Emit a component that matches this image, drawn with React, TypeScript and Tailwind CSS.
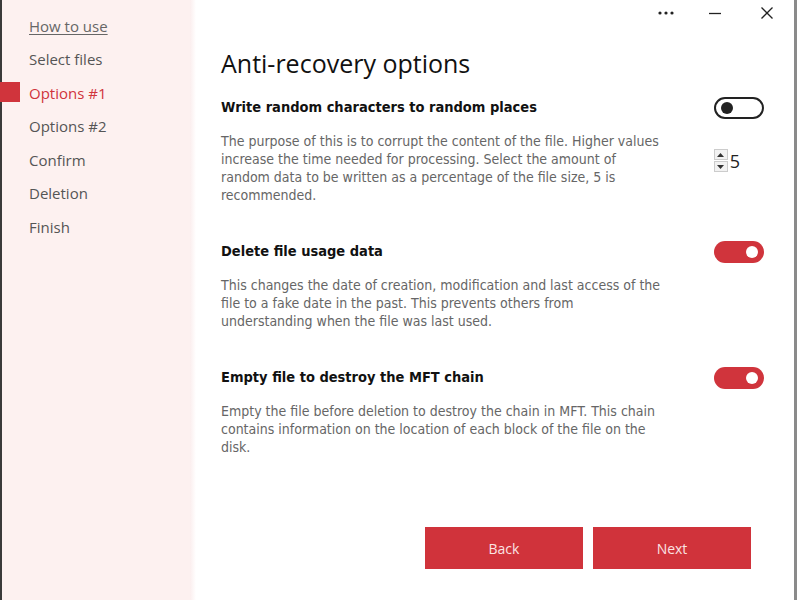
import React from "react";

const navItems = [
  "How to use",
  "Select files",
  "Options #1",
  "Options #2",
  "Confirm",
  "Deletion",
  "Finish",
];

const bodyFont = {
  fontFamily: '"DejaVu Sans Condensed", "DejaVu Sans", Verdana, sans-serif',
};

function Toggle({ on }: { on: boolean }) {
  if (on) {
    return (
      <div className="flex h-[22px] w-[50px] items-center justify-end rounded-full bg-[#d0343c] pr-[6px]">
        <div className="h-[12px] w-[12px] rounded-full bg-white" />
      </div>
    );
  }
  return (
    <div className="flex h-[22px] w-[50px] items-center rounded-full border-2 border-[#222] pl-[5px]">
      <div className="h-[12px] w-[12px] rounded-full bg-[#222]" />
    </div>
  );
}

function Spinner() {
  return (
    <div className="flex items-center gap-[2px]">
      <div className="flex flex-col gap-[1px]">
        <div className="flex h-[11px] w-[14px] items-center justify-center border border-[#ccc] bg-[#f2f2f2]">
          <svg width="7" height="4" viewBox="0 0 7 4">
            <path d="M0 4 L3.5 0 L7 4 Z" fill="#333" />
          </svg>
        </div>
        <div className="flex h-[11px] w-[14px] items-center justify-center border border-[#ccc] bg-[#f2f2f2]">
          <svg width="7" height="4" viewBox="0 0 7 4">
            <path d="M0 0 L3.5 4 L7 0 Z" fill="#333" />
          </svg>
        </div>
      </div>
      <span
        className="text-[18px] leading-none text-[#222]"
        style={{ fontFamily: '"Open Sans", sans-serif' }}
      >
        5
      </span>
    </div>
  );
}

function Option({
  title,
  text,
  control,
  side,
}: {
  title: string;
  text: string[];
  control: React.ReactNode;
  side?: React.ReactNode;
}) {
  return (
    <div className="flex flex-col">
      <div className="flex h-[22px] items-center justify-between pr-[30px]">
        <div className="text-[14.5px] font-bold text-[#111]" style={bodyFont}>
          {title}
        </div>
        {control}
      </div>
      <div className="mt-[13px] flex items-start justify-between pr-[54px]">
        <div className="text-[14px] leading-[18px] text-[#666]" style={bodyFont}>
          {text.map((t) => (
            <div key={t}>{t}</div>
          ))}
        </div>
        {side}
      </div>
    </div>
  );
}

export default function App() {
  return (
    <div className="flex h-[600px] w-[800px] overflow-hidden bg-white">
      <div className="w-[2px] bg-[#3a3a3a]" />
      <aside
        className="relative flex w-[188px] flex-col bg-[#fdf1f0] pt-[9px]"
        style={{ fontFamily: '"Open Sans", "Noto Sans", sans-serif' }}
      >
        {navItems.map((item, i) => {
          const active = i === 2;
          return (
            <div key={item} className="relative flex h-[33.5px] items-center">
              {active && (
                <div className="absolute left-[-2px] top-[6px] h-[20px] w-[20px] bg-[#d0343c]" />
              )}
              <span
                className={
                  "ml-[27px] text-[15px] " +
                  (active
                    ? "text-[#d0343c]"
                    : i === 0
                      ? "text-[#666] underline underline-offset-2"
                      : "text-[#555]")
                }
              >
                {item}
              </span>
            </div>
          );
        })}
        <div className="absolute right-[-6px] top-0 h-full w-[6px] bg-gradient-to-r from-[#fbeeee] to-white" />
      </aside>

      <main className="flex flex-1 flex-col">
        <div className="flex h-[26px] items-center justify-end pr-[21px] text-[#222]">
          <svg width="16" height="4" viewBox="0 0 16 4">
            <circle cx="2" cy="2" r="1.6" fill="#222" />
            <circle cx="8" cy="2" r="1.6" fill="#222" />
            <circle cx="14" cy="2" r="1.6" fill="#222" />
          </svg>
          <svg className="ml-[35px]" width="12" height="12" viewBox="0 0 12 12">
            <path d="M0 6.5 H12" stroke="#222" strokeWidth="1.3" />
          </svg>
          <svg className="ml-[40px]" width="12" height="12" viewBox="0 0 12 12">
            <path d="M0.5 0.5 L11.5 11.5 M11.5 0.5 L0.5 11.5" stroke="#222" strokeWidth="1.3" />
          </svg>
        </div>

        <div className="flex flex-1 flex-col pl-[31px]">
          <h1
            className="mt-[20px] text-[25px] leading-[34px] text-[#111]"
            style={{ fontFamily: '"Open Sans", "Noto Sans", sans-serif' }}
          >
            Anti-recovery options
          </h1>

          <div className="mt-[17px] flex flex-col gap-[37px]">
            <Option
              title="Write random characters to random places"
              text={[
                "The purpose of this is to corrupt the content of the file. Higher values",
                "increase the time needed for processing. Select the amount of",
                "random data to be written as a percentage of the file size, 5 is",
                "recommended.",
              ]}
              control={<Toggle on={false} />}
              side={
                <div className="mt-[17px]">
                  <Spinner />
                </div>
              }
            />
            <Option
              title="Delete file usage data"
              text={[
                "This changes the date of creation, modification and last access of the",
                "file to a fake date in the past. This prevents others from",
                "understanding when the file was last used.",
              ]}
              control={<Toggle on={true} />}
            />
            <Option
              title="Empty file to destroy the MFT chain"
              text={[
                "Empty the file before deletion to destroy the chain in MFT. This chain",
                "contains information on the location of each block of the file on the",
                "disk.",
              ]}
              control={<Toggle on={true} />}
            />
          </div>

          <div className="mt-auto mb-[31px] flex justify-end gap-[10px] pr-[43px]">
            {["Back", "Next"].map((b) => (
              <button
                key={b}
                className="flex h-[42px] w-[158px] items-center justify-center bg-[#d0333b] text-[14px] text-[#fbe3e3]"
                style={{ fontFamily: '"Open Sans", "Noto Sans", sans-serif' }}
              >
                {b}
              </button>
            ))}
          </div>
        </div>
      </main>
      <div className="w-[3px] bg-[#8a8a8a]" />
      <div className="w-[3px] bg-white" />
    </div>
  );
}
